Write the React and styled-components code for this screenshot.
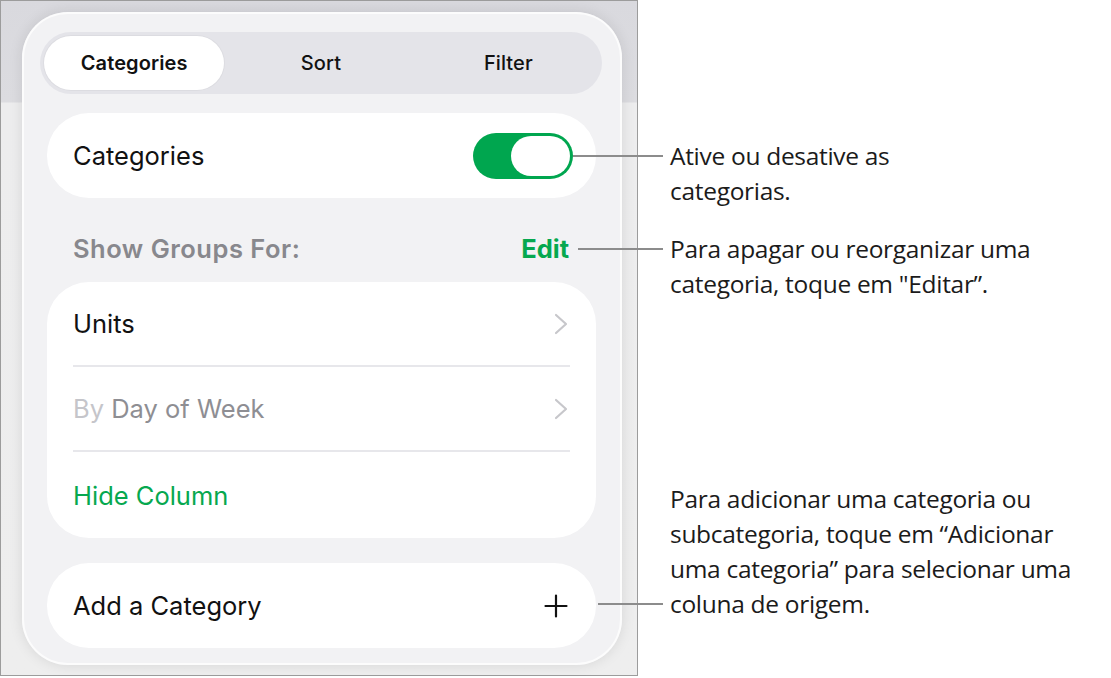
import styled, { createGlobalStyle } from "styled-components";

const GlobalStyle = createGlobalStyle`
  html, body {
    margin: 0;
    padding: 0;
    background: #ffffff;
  }
  * {
    box-sizing: border-box;
  }
`;

const green = "#06a84f";

const Page = styled.div`
  display: flex;
  width: 1111px;
  height: 678px;
  background: #ffffff;
  font-family: Inter, "Noto Sans", sans-serif;
`;

const DeviceFrame = styled.div`
  flex: none;
  width: 638px;
  height: 676px;
  border: 1px solid #9c9c9c;
  background: linear-gradient(#d9d9de 0, #dcdce0 101px, #ededee 102px, #eeeeee 100%);
  padding: 11px 0 0 21px;
`;

const Popover = styled.div`
  width: 600px;
  height: 653px;
  border-radius: 46px;
  background: #f2f2f4;
  box-shadow: 0 0 14px rgba(0, 0, 0, 0.1), inset 0 0 0 2px rgba(255, 255, 255, 0.75);
  padding: 20px 26px 0 25px;
  display: flex;
  flex-direction: column;
`;

const Segmented = styled.div`
  margin: 0 -6px 0 -7px;
  height: 62px;
  border-radius: 31px;
  background: #e4e4e9;
  padding: 4px 0;
  display: grid;
  grid-template-columns: repeat(3, 1fr);
`;

const Segment = styled.div`
  display: flex;
  align-items: center;
  justify-content: center;
  border-radius: 27px;
  font-size: 20px;
  font-weight: ${(p) => (p.$active ? 600 : 500)};
  letter-spacing: 0.1px;
  color: #111;
  background: ${(p) => (p.$active ? "#ffffff" : "transparent")};
  box-shadow: ${(p) => (p.$active ? "0 0 0 1px rgba(0,0,0,0.03)" : "none")};
  margin: ${(p) => (p.$active ? "0 3px 0 4px" : "0")};
`;

const Card = styled.div`
  background: #ffffff;
  border-radius: 42px;
  margin-top: ${(p) => p.$gap || 0}px;
  overflow: hidden;
`;

const Row = styled.div`
  height: ${(p) => p.$h || 84}px;
  display: flex;
  align-items: center;
  justify-content: space-between;
  padding: 0 ${(p) => p.$right || 28}px 0 26px;
  font-size: 25.5px;
  color: ${(p) => p.$color || "#111"};
`;

const Divider = styled.div`
  height: 2px;
  margin: 0 26px;
  background: #e7e7eb;
`;

const Muted = styled.span`
  color: #c5c5ca;
`;

const Toggle = styled.div`
  width: 100px;
  height: 46px;
  border-radius: 23px;
  background: #00a64f;
  padding: 3px;
  display: flex;
  justify-content: flex-end;
`;

const Knob = styled.div`
  width: 59px;
  height: 40px;
  border-radius: 20px;
  background: #ffffff;
`;

const SectionHeader = styled.div`
  height: 84px;
  padding: 16px 27px 0 26px;
  display: flex;
  align-items: center;
  justify-content: space-between;
  font-size: 25.5px;
  font-weight: 600;
  letter-spacing: 0.5px;
  color: #88888d;
`;

const EditLink = styled.span`
  color: ${green};
  font-weight: 700;
  letter-spacing: 0;
`;

const Notes = styled.div`
  flex: 1;
  padding-left: 32px;
  display: flex;
  flex-direction: column;
  font-family: "Open Sans", "Noto Sans", sans-serif;
  font-size: 24.5px;
  line-height: 35px;
  color: #1b1b1b;
  letter-spacing: -0.3px;
`;

const Callout = styled.p`
  position: relative;
  margin: ${(p) => p.$top}px 0 0;
  white-space: nowrap;

  &::before {
    content: "";
    position: absolute;
    left: -${(p) => p.$lead + 7}px;
    width: ${(p) => p.$lead}px;
    height: 2px;
    background: #8c8c8c;
    ${(p) => (p.$anchor === "last" ? "bottom: 16px;" : "top: 17px;")}
  }
`;

const Chevron = () => (
  <svg width="14" height="22" viewBox="0 0 14 22" fill="none">
    <polyline
      points="2,2 12,11 2,20"
      stroke="#c7c7cb"
      strokeWidth="2.2"
      strokeLinecap="round"
      strokeLinejoin="round"
    />
  </svg>
);

const Plus = () => (
  <svg width="24" height="24" viewBox="0 0 24 24" fill="none">
    <path d="M12 1.5v21M1.5 12h21" stroke="#111" strokeWidth="2.2" strokeLinecap="round" />
  </svg>
);

export default function App() {
  return (
    <>
      <GlobalStyle />
      <Page>
        <DeviceFrame>
          <Popover>
            <Segmented>
              <Segment $active>Categories</Segment>
              <Segment>Sort</Segment>
              <Segment>Filter</Segment>
            </Segmented>

            <Card $gap={19}>
              <Row $h={85} $right={23}>
                Categories
                <Toggle>
                  <Knob />
                </Toggle>
              </Row>
            </Card>

            <SectionHeader>
              Show Groups For:
              <EditLink>Edit</EditLink>
            </SectionHeader>

            <Card>
              <Row $h={83}>
                Units
                <Chevron />
              </Row>
              <Divider />
              <Row $h={83} $color="#8e8e93">
                <span>
                  <Muted>By</Muted> Day of Week
                </span>
                <Chevron />
              </Row>
              <Divider />
              <Row $h={86} $color={green}>
                Hide Column
              </Row>
            </Card>

            <Card $gap={25}>
              <Row $h={85}>
                Add a Category
                <Plus />
              </Row>
            </Card>
          </Popover>
        </DeviceFrame>

        <Notes>
          <Callout $top={138} $lead={90}>
            Ative ou desative as
            <br />
            categorias.
          </Callout>
          <Callout $top={23} $lead={85}>
            Para apagar ou reorganizar uma
            <br />
            categoria, toque em "Editar”.
          </Callout>
          <Callout $top={180} $lead={65} $anchor="last">
            Para adicionar uma categoria ou
            <br />
            subcategoria, toque em “Adicionar
            <br />
            uma categoria” para selecionar uma
            <br />
            coluna de origem.
          </Callout>
        </Notes>
      </Page>
    </>
  );
}
